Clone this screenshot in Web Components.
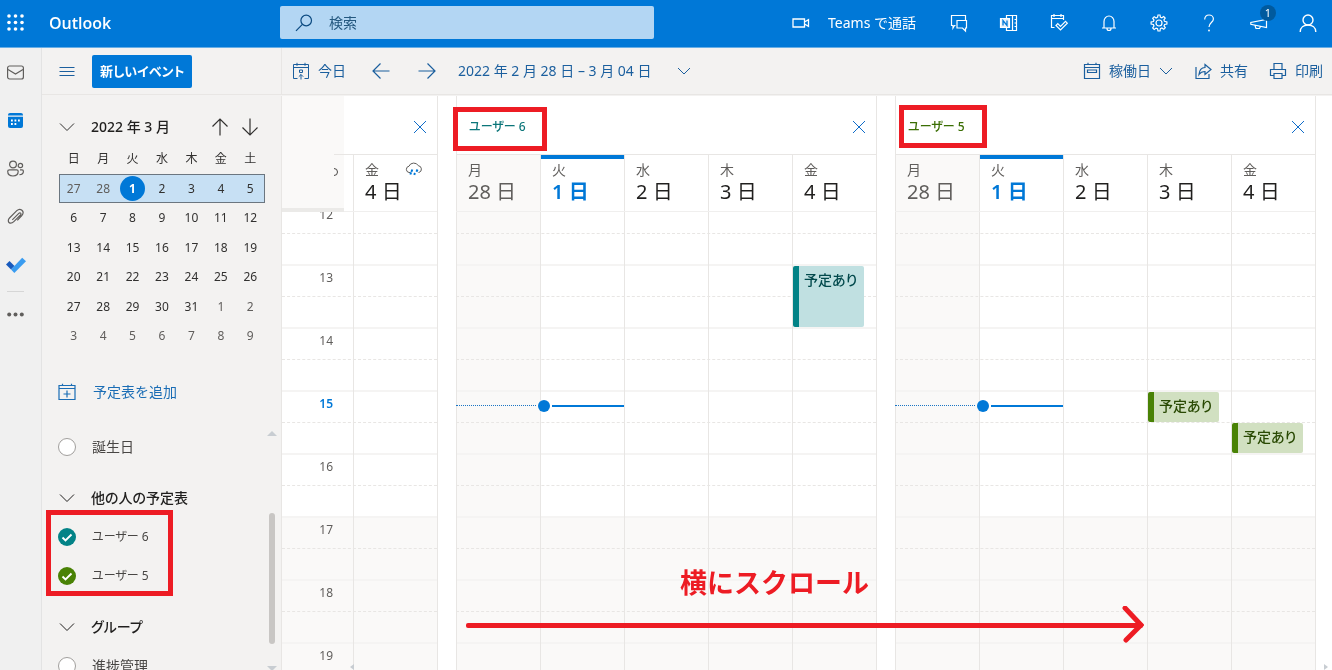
<!DOCTYPE html>
<html lang="ja">
<head>
<meta charset="utf-8">
<meta name="viewport" content="width=device-width, initial-scale=1">
<title>予定表 - Outlook</title>
<style>
  body { margin: 0; background: #fff; font: 14px/20px "Noto Sans", "Noto Sans CJK JP", sans-serif; color: #323130; }
</style>
</head>
<body>
<outlook-app></outlook-app>
<script>
const define = (name, render) => customElements.define(name, class extends HTMLElement {
  connectedCallback() {
    if (this.shadowRoot) return;
    const t = document.createElement('template');
    t.innerHTML = render(this);
    this.attachShadow({ mode: 'open' }).append(t.content.cloneNode(true));
  }
});

const BUTTON = `button { font: inherit; color: inherit; background: none; border: 0; padding: 0; margin: 0; display: flex; align-items: center; cursor: pointer; white-space: nowrap; }`;

/* ---------- icons ---------- */
const ICONS = {
  waffle: [17, [2, 8.5, 15].map(y => [2, 8.5, 15].map(x => `<circle cx="${x}" cy="${y}" r="1.8" fill="currentColor" stroke="none"/>`).join('')).join('')],
  search: [18, `<circle cx="11.2" cy="6.5" r="5.3"/><path d="M7.4 10.4 1 16.8"/>`],
  video: [18, `<path d="M1 5h11.5v8H1zM12.5 8l4-2.300v6.600l-4-2.300"/>`],
  chat: [18, `<path d="M5.500 11.500H4.500L3 14v-2.500H1.500v-10h14V6"/><path d="M7 6.500h9.500v7.500h-1v3l-3-3H7z"/>`],
  onenote: [18, `<path d="M6.500 4.500v-3h10v15h-10v-3M12.500 1.500v15M14.500 5.500h2M14.500 9h2M14.500 12.500h2"/><path d="M.5 4.500h9v9h-9z" fill="#e6f2fc"/><path d="M3 11.500v-5l4 5v-5" stroke="#0078d7" stroke-width="1.300"/>`],
  todo: [18, `<path d="M4.500 13.500h-3v-12h12V6M1.500 4.500h12M4 0v3M11 0v3"/><path d="m6 11.500 1.800-1.800 2.700 2.700 5-5 1.800 1.800-6.800 6.800z"/>`],
  bell: [18, `<path d="M4 14V7.500a5 5.500 0 0 1 10 0V14M2 14h14M7 14.500a2 2 0 0 0 4 0"/>`],
  gear: [18, `<path d="M7.600 3.200 8 1h2l.4 2.200 1.400.6 1.900-1.300 1.500 1.500-1.300 1.900.6 1.400L16.900 8v2l-2.300.5-.6 1.400 1.300 1.900-1.500 1.500-1.900-1.300-1.500.6L10 17H8l-.5-2.300-1.400-.6-1.900 1.300-1.500-1.500L4 12l-.6-1.500L1.100 10V8l2.300-.5L4 6.100 2.700 4.200l1.500-1.500L6.100 4z"/><circle cx="9" cy="9" r="3"/>`],
  help: [18, `<path d="M4.700 5.500C4.700 2.500 6.500 1 9 1s4.400 1.700 4.400 4c0 3.500-4.400 3.700-4.400 8"/><circle cx="9" cy="16.500" r=".9" fill="currentColor" stroke="none"/>`],
  megaphone: [18, `<path d="M16.500 5.500v8L.8 10.300V8.500zM5 11.500l1 3h3.500l1-2"/>`],
  person: [18, `<circle cx="9" cy="6" r="5"/><path d="M1.200 18c0-4.500 3.500-7 7.800-7s7.800 2.500 7.800 7"/>`],
  mail: [17, `<rect x=".6" y="2" width="15.800" height="13" rx="2"/><path d="m1 5.500 7.500 4.500L16 5.500"/>`],
  calendarFill: [17, `<path d="M1 3.500V3a2 2 0 0 1 2-2h11a2 2 0 0 1 2 2v.5z" fill="currentColor" stroke="none"/><path d="M1 4.800h15V14a2 2 0 0 1-2 2H3a2 2 0 0 1-2-2z" fill="currentColor" stroke="none"/><path d="M4 8.500h1.800M7.500 8.500h1.800M11 8.500h1.800M4 12h1.800M7.500 12h1.800" stroke="#fff" stroke-width="1.800"/>`],
  people: [17, `<circle cx="6" cy="4.500" r="3.400"/><circle cx="13.400" cy="5.500" r="2.200"/><path d="M2.500 9.800h7.200c1 0 1.500.7 1.500 1.500 0 3-2 4.700-5.200 4.700S.7 14.300.7 11.300c0-.8.7-1.500 1.800-1.500zM13 9.800h2c.8 0 1.400.6 1.400 1.400 0 2-1.400 3.400-3.900 3.400"/>`],
  clip: [17, `<path d="m5 11.500 6.500-6.500c1.400-1.400 3 .3 1.700 1.700L6.500 13.300C4.500 15.300 1 15.700 1 12.200c0-1 .5-1.800 1.200-2.500L9.500 2.400c3.500-3.500 8.500.8 5 4.800l-4.500 4.900" transform="translate(.3 .3)"/>`],
  check: [20, `<path d="M0 10.500 3.500 7l5 5-3.500 3.600z" fill="#185abd" stroke="none"/><path d="M5 15.600 16.200 3.800 20 7.300 8.300 19z" fill="#3a9cf0" stroke="none"/>`],
  more: [17, `<circle cx="2.200" cy="8.500" r="2" fill="currentColor" stroke="none"/><circle cx="8.500" cy="8.500" r="2" fill="currentColor" stroke="none"/><circle cx="14.800" cy="8.500" r="2" fill="currentColor" stroke="none"/>`],
  menu: [16, `<path d="M.5 4.500h15M.5 8.500h15M.5 12.500h15"/>`],
  today: [18, `<path d="M5.500 16.500h-4v-14h15v14h-4M1.500 5.500h15M5 .8v3M13 .8v3M7.500 8h3v2.500h-3zM9 17.500V12.500M6.800 14.700 9 12.500l2.200 2.200"/>`],
  left: [18, `<path d="M17.500 9H1M8.500 1.500 1 9l7.500 7.500"/>`],
  right: [18, `<path d="M.5 9H17M9.500 1.500 17 9l-7.500 7.500"/>`],
  up: [18, `<path d="M9 17.500V1M1.500 8.500 9 1l7.500 7.500"/>`],
  down: [18, `<path d="M9 .5V17M1.500 9.500 9 17l7.500-7.500"/>`],
  chevron: [16, `<path d="m1 4.500 7 7 7-7"/>`],
  chevronSmall: [14, `<path d="m1 4 6 6 6-6"/>`],
  week: [18, `<path d="M1.500 2.500h15v14h-15zM1.500 5.500h15M5 .8v2M13 .8v2M4.500 8h9v2.500h-9z"/>`],
  share: [18, `<path d="M2 5v11.500h13V12"/><path d="M11 2.500 17 7.500l-6 5V9.500c-3 0-4.500.8-6 3C5.300 8.500 7.500 5.700 11 5.500z"/>`],
  print: [18, `<path d="M4.500 13.500H1.500v-6h15v6h-3M5 7.500v-6h8v6M5 11.500h8v5H5z"/>`],
  addCalendar: [18, `<path d="M1 2.500h16v14H1zM1 5.500h16M4.500.8v2M13.500.8v2M9 7.500v7M5.500 11h7"/>`],
  close: [14, `<path d="m1 1 12 12M13 1 1 13"/>`],
  rain: [18, `<path d="M5 11.500H4a3.200 3.200 0 0 1 0-6.300 5 4.500 0 0 1 9.300-.5 3.500 3.500 0 0 1 .7 6.800h-.5"/><path d="m7.300 8.500-2 5M12.500 8.500l-1.300 2.800M10 12l-.8 1.800" stroke="#0078d7" stroke-width="2" stroke-dasharray="2.500 .6"/>`],
  tick: [18, `<path d="m4.500 9.500 3 3 6-6" stroke-width="1.900"/>`]
};
define('ol-icon', el => {
  const [size, art] = ICONS[el.getAttribute('name')];
  return `<style>:host { display: block; flex: none; } svg { display: block; overflow: visible; }</style>
  <svg width="${size}" height="${size}" viewBox="0 0 ${size} ${size}" fill="none" stroke="currentColor" stroke-width="${el.getAttribute('weight') || 1}" aria-hidden="true">${art}</svg>`;
});

/* ---------- red marker frame laid over its parent ---------- */
define('marker-frame', () => `<style>:host { position: absolute; box-sizing: border-box; border: 5px solid #ed1c24; pointer-events: none; z-index: 3; }</style>`);

/* ---------- blue bar ---------- */
define('app-header', () => `<style>
  :host { display: flex; align-items: center; height: 47px; background: #0078d7; border-bottom: 1px solid #67aee6; color: #fff; }
  ${BUTTON}
  .brand { display: flex; align-items: center; flex: none; width: 280px; padding: 0 0 2px 7px; gap: 25px; box-sizing: border-box; }
  .brand a { color: #fff; text-decoration: none; font: 600 16px/20px "Open Sans", "Noto Sans", sans-serif; }
  label { display: flex; align-items: center; gap: 16px; flex: 0 1 374px; height: 33px; box-sizing: border-box; padding: 0 15px; background: #b3d6f3; border-radius: 2px; color: #0b4a80; margin-bottom: 2px; min-width: 0; }
  input { flex: 1; min-width: 0; border: 0; outline: 0; background: none; font: inherit; color: inherit; padding: 0; }
  input::placeholder { color: #24587f; opacity: 1; }
  nav { display: flex; align-items: center; margin-left: auto; padding-bottom: 2px; }
  nav button { width: 50px; height: 40px; justify-content: center; position: relative; }
  nav .teams { width: auto; gap: 18px; margin-right: 18px; }
  nav button:last-child { width: 48px; }
  .badge { position: absolute; right: 8px; top: 2px; width: 16px; height: 16px; border-radius: 8px; background: #005a9e; font-size: 11px; line-height: 16px; text-align: center; }
</style>
<div class="brand"><button aria-label="アプリ起動ツール"><ol-icon name="waffle"></ol-icon></button><a href="#">Outlook</a></div>
<label><ol-icon name="search" weight="1.200"></ol-icon><input type="search" placeholder="検索" aria-label="検索"></label>
<nav>
  <button class="teams"><ol-icon name="video" weight="1.300"></ol-icon><span>Teams で通話</span></button>
  ${['chat', 'onenote', 'todo', 'bell', 'gear', 'help'].map(n => `<button aria-label="${n}"><ol-icon name="${n}" weight="1.200"></ol-icon></button>`).join('')}
  <button aria-label="お知らせ"><ol-icon name="megaphone" weight="1.200"></ol-icon><span class="badge">1</span></button>
  <button aria-label="アカウント"><ol-icon name="person" weight="1.400"></ol-icon></button>
</nav>`);

/* ---------- module rail ---------- */
define('app-rail', () => `<style>
  :host { display: flex; flex-direction: column; width: 31px; padding-right: 10px; background: #f0f0f0; border-right: 1px solid #e3e3e3; color: #605e5c; }
  a { display: flex; height: 48px; align-items: center; justify-content: center; color: inherit; }
  a.on { color: #0078d7; }
  hr { width: 17px; margin: 3px auto 0; border: 0; border-top: 1px solid #d6d6d6; }
  hr + a { height: 44px; }
</style>
<a href="#mail" aria-label="メール"><ol-icon name="mail" weight="1.200"></ol-icon></a>
<a href="#calendar" class="on" aria-label="予定表"><ol-icon name="calendarFill"></ol-icon></a>
<a href="#people" aria-label="連絡先"><ol-icon name="people" weight="1.200"></ol-icon></a>
<a href="#files" aria-label="ファイル"><ol-icon name="clip" weight="1.200"></ol-icon></a>
<a href="#todo" aria-label="To Do"><ol-icon name="check"></ol-icon></a>
<hr>
<a href="#more" aria-label="その他"><ol-icon name="more"></ol-icon></a>`);

/* ---------- command bar ---------- */
define('app-toolbar', () => `<style>
  :host { display: flex; height: 46px; border-bottom: 1px solid #e8e6e4; background: #f3f2f1; color: #1b5f9e; }
  ${BUTTON}
  .side { display: flex; align-items: center; gap: 17px; flex: none; width: 240px; padding-left: 17px; box-sizing: border-box; border-right: 1px solid #e8e6e4; }
  .new { height: 33px; padding: 0 8px; border-radius: 2px; background: #0078d7; color: #fff; font-size: 13px; font-weight: 600; font-feature-settings: "palt"; }
  .bar { display: flex; align-items: center; flex: 1; padding: 0 9px 0 10px; }
  .bar button { gap: 8px; }
  .prev { margin-left: 26px; }
  .next { margin-left: 28px; }
  .bar .range { margin-left: 22px; gap: 26px; }
  .right { display: flex; margin-left: auto; gap: 21px; }
</style>
<div class="side"><button aria-label="メニュー"><ol-icon name="menu"></ol-icon></button><button class="new">新しいイベント</button></div>
<div class="bar">
  <button><ol-icon name="today"></ol-icon>今日</button>
  <button class="prev" aria-label="前の週"><ol-icon name="left" weight="1.200"></ol-icon></button>
  <button class="next" aria-label="次の週"><ol-icon name="right" weight="1.200"></ol-icon></button>
  <button class="range">2022 年 2 月 28 日 – 3 月 04 日 <ol-icon name="chevronSmall"></ol-icon></button>
  <div class="right">
    <button><ol-icon name="week" weight="1.200"></ol-icon>稼働日<ol-icon name="chevronSmall"></ol-icon></button>
    <button><ol-icon name="share" weight="1.200"></ol-icon>共有</button>
    <button><ol-icon name="print" weight="1.200"></ol-icon>印刷</button>
  </div>
</div>`);

/* ---------- month picker ---------- */
define('mini-calendar', () => {
  const days = [27, 28, ...Array.from({ length: 31 }, (_, i) => i + 1), 1, 2, 3, 4, 5, 6, 7, 8, 9];
  const rows = Array.from({ length: 6 }, (_, r) => `<tr${r === 0 ? ' class="week"' : ''}>${days.slice(r * 7, r * 7 + 7).map((d, c) => {
    const i = r * 7 + c;
    return `<td class="${i < 2 || i > 32 ? 'out' : ''}">${i === 2 ? '<b>1</b>' : d}</td>`;
  }).join('')}</tr>`).join('');
  return `<style>
  :host { display: block; padding: 13px 16px 0 17px; }
  ${BUTTON}
  header { display: flex; align-items: center; height: 35px; color: #323130; }
  h2 { flex: 1; margin: 0 0 0 16px; font-size: 14px; line-height: 20px; font-weight: 500; color: #201f1e; }
  .nav { margin-right: 12px; }
  .nav + .nav { margin-right: 6px; }
  table { width: 206px; border-collapse: collapse; table-layout: fixed; font-size: 12px; line-height: 16px; text-align: center; }
  tr { height: 30px; }
  tbody tr:nth-child(odd) { height: 29px; }
  th, td { padding: 0; font-weight: 400; color: #323130; }
  td.out { color: #605e5c; }
  .week { background: #c7e0f4; outline: 1px solid #6b7680; outline-offset: -1px; }
  b { display: block; width: 25px; height: 25px; margin: 0 auto; border-radius: 13px; background: #0078d7; color: #fff; line-height: 25px; }
</style>
<header><button aria-label="折りたたむ"><ol-icon name="chevron"></ol-icon></button><h2>2022 年 3 月</h2>
<button class="nav" aria-label="前の月"><ol-icon name="up" weight="1.200"></ol-icon></button><button class="nav" aria-label="次の月"><ol-icon name="down" weight="1.200"></ol-icon></button></header>
<table><thead><tr>${[...'日月火水木金土'].map(d => `<th scope="col">${d}</th>`).join('')}</tr></thead><tbody>${rows}</tbody></table>`;
});

/* ---------- calendar list ---------- */
define('calendar-choice', el => `<style>
  :host { display: block; }
  label { display: flex; align-items: center; gap: 16px; height: 39px; font-feature-settings: "palt"; color: #484644; }
  .box { display: grid; color: #fff; }
  .box > * { grid-area: 1 / 1; }
  input { appearance: none; box-sizing: border-box; width: 18px; height: 18px; margin: 0; border: 1px solid #a19f9d; border-radius: 9px; background: #fff; }
  input:checked { border: 0; background: var(--tint); }
  ol-icon { pointer-events: none; }
</style>
<label><span class="box"><input type="checkbox"${el.hasAttribute('checked') ? ' checked' : ''}><ol-icon name="tick"></ol-icon></span><span><slot></slot></span></label>`);

define('calendar-group', () => `<style>
  :host { display: block; margin-top: 13px; position: relative; }
  ${BUTTON}
  button { gap: 16px; height: 38px; padding-left: 1px; font-weight: 500; color: #201f1e; font-feature-settings: "palt"; }
</style>
<button aria-expanded="true"><ol-icon name="chevron"></ol-icon><slot name="title"></slot></button><slot></slot>`);

define('app-sidebar', () => `<style>
  :host { display: flex; flex-direction: column; width: 240px; flex: none; background: #f3f2f1; border-right: 1px solid #e8e6e4; box-sizing: border-box; min-height: 0; }
  ${BUTTON}
  .add { height: 38px; margin: 22px 16px 16px; gap: 17px; color: #1a6db5; }
  .list { display: flex; flex: 1; min-height: 0; overflow: hidden; }
  .items { flex: 1; padding-left: 16px; }
  .user { font-size: 12px; }
  marker-frame { inset: 31px auto auto -12px; width: 127px; height: 86px; }
  .scroll { display: flex; flex-direction: column; align-items: center; width: 9px; margin-right: 5px; padding: 4px 0 0; }
  .arrow { width: 0; height: 0; border: 5px solid transparent; border-top: 0; border-bottom-color: #c8cdd2; }
  .arrow.down { border: 5px solid transparent; border-bottom: 0; border-top-color: #c8cdd2; }
  .thumb { width: 6px; height: 131px; margin: 77px 0 22px; border-radius: 3px; background: #c8c6c4; flex: none; }
</style>
<mini-calendar></mini-calendar>
<button class="add"><ol-icon name="addCalendar" weight="1.200"></ol-icon>予定表を追加</button>
<div class="list">
  <div class="items">
    <calendar-choice>誕生日</calendar-choice>
    <calendar-group><span slot="title">他の人の予定表</span>
      <calendar-choice class="user" checked style="--tint:#038387">ユーザー 6</calendar-choice>
      <calendar-choice class="user" checked style="--tint:#498205">ユーザー 5</calendar-choice>
      <marker-frame></marker-frame>
    </calendar-group>
    <calendar-group><span slot="title">グループ</span><calendar-choice>進捗管理</calendar-choice></calendar-group>
  </div>
  <div class="scroll"><span class="arrow"></span><span class="thumb"></span><span class="arrow down"></span></div>
</div>`);

/* ---------- one person's week ---------- */
define('calendar-event', () => `<style>
  :host { position: absolute; left: 0; right: 12px; box-sizing: border-box; padding-left: 5px; border-left: 6px solid var(--tint); border-radius: 2px; background: var(--fill); color: var(--ink); font-weight: 500; line-height: 28px; font-feature-settings: "palt"; white-space: nowrap; overflow: hidden; }
</style><slot></slot>`);

const HOURS = [12, 13, 14, 15, 16, 17, 18, 19];
const PANEL = `
  :host { display: flex; flex-direction: column; min-width: 0; position: relative; border-right: 1px solid #e8e6e4; box-sizing: border-box; }
  ${BUTTON}
  header { display: flex; align-items: center; height: 58px; flex: none; padding: 0 10px 0 13px; border-bottom: 1px solid #e8e6e4; box-sizing: content-box; position: relative; }
  h3 { flex: 1; margin: 0; padding-top: 4px; font-size: 12px; line-height: 20px; font-weight: 500; color: var(--name); font-feature-settings: "palt"; }
  header button { color: #0f6cc9; padding-top: 4px; }
  .heads, .cols, .now { display: grid; grid-template-columns: var(--cols); }
  .head { height: 56px; box-sizing: border-box; padding: 5px 14px 0 11px; border-left: 1px solid #e8e6e4; }
  .heads { border-bottom: 1px solid #f0efee; }
  .head.past, .col.past { background: #faf9f8; }
  .head p { display: flex; align-items: center; justify-content: space-between; margin: 0; color: #605e5c; line-height: 20px; }
  .head strong { display: block; font-weight: 400; font-size: 20px; line-height: 24px; color: #201f1e; white-space: nowrap; }
  .head.past strong { color: #605e5c; }
  .head.today { box-shadow: inset 0 4px #0078d7; }
  .head.today strong { color: #0078d7; font-weight: 600; }
  .body { position: relative; flex: 1; overflow: hidden; min-height: 0; }
  .hours { margin-top: -11px; }
  .hour { height: 63px; box-sizing: border-box; border-top: 2px solid #f5f4f3; position: relative; }
  .hour::after { content: ""; display: block; border-top: 1px dashed #e8e6e4; }
  .hour::before { content: ""; display: block; height: 30px; }
  .off { background: #faf9f8; }
  .cols { position: absolute; inset: 0; mix-blend-mode: darken; }
  .col { border-left: 1px solid #e8e6e4; position: relative; }
`;
define('calendar-panel', el => {
  const names = [...'月火水木金'], dates = [28, 1, 2, 3, 4];
  const kind = ['past', 'today', '', '', ''];
  return `<style>${PANEL}
  :host { --cols: repeat(5, 1fr); }
  header { border-left: 1px solid #e8e6e4; padding-left: 12px; }
  .now { position: absolute; left: 0; right: 0; top: 187px; align-items: center; height: 13px; }
  .past-line { border-top: 1px dotted #1b75c4; margin-right: 4px; }
  .today-line { display: flex; align-items: center; gap: 2px; margin-left: -2px; }
  .today-line i { width: 12px; height: 12px; border-radius: 6px; background: #0078d7; }
  .today-line i + i { flex: 1; height: 2px; border-radius: 0; }
</style>
<header><h3>${el.getAttribute('name')}</h3><button aria-label="閉じる"><ol-icon name="close"></ol-icon></button><slot name="mark"></slot></header>
<div class="heads">${names.map((n, i) => `<div class="head ${kind[i]}"><p>${n}</p><strong>${dates[i]} 日</strong></div>`).join('')}</div>
<div class="body"><div class="hours">${HOURS.map(h => `<div class="hour${h > 16 ? ' off' : ''}"></div>`).join('')}</div>
<div class="cols">${kind.map((k, i) => `<div class="col ${k}"><slot name="day${i}"></slot></div>`).join('')}</div>
<div class="now"><span class="past-line"></span><span class="today-line"><i></i><i></i></span></div></div>`;
});

/* the calendar that is scrolled half under the time gutter */
define('calendar-edge', () => `<style>${PANEL}
  :host { --cols: 71px 1fr; }
  .head:first-child, .col:first-child { border-left: 0; }
  .label { position: absolute; top: 4px; left: 0; width: 51px; text-align: right; font-size: 12px; line-height: 16px; color: #605e5c; }
  .label.current { color: #0078d7; font-weight: 600; }
  .corner { position: absolute; left: 0; top: 0; width: 62px; height: 116px; box-sizing: border-box; background: #faf9f8; border-bottom: 4px solid #ebeae8; }
  .corner::after { content: ""; position: absolute; left: 52px; top: 58px; width: 10px; border-top: 1px solid #e8e6e4; }
  .cut { position: absolute; left: 52px; top: 72px; width: 4px; height: 8px; overflow: hidden; }
  .cut::after { content: ""; position: absolute; right: 0; width: 6px; height: 6px; border: 1px solid #484644; border-radius: 4px; }
</style>
<header><h3></h3><button aria-label="閉じる"><ol-icon name="close"></ol-icon></button></header>
<div class="heads"><div class="head"></div><div class="head"><p>金<ol-icon name="rain"></ol-icon></p><strong>4 日</strong></div></div>
<div class="body"><div class="hours">${HOURS.map(h => `<div class="hour${h > 16 ? ' off' : ''}"><span class="label${h === 15 ? ' current' : ''}">${h}</span></div>`).join('')}</div>
<div class="cols"><div class="col"></div><div class="col"></div></div></div>
<div class="corner"><span class="cut"></span></div>`);

/* ---------- red note with its arrow ---------- */
define('scroll-note', () => `<style>
  :host { position: absolute; left: 184px; right: 188px; top: 468px; color: #ed1c24; pointer-events: none; z-index: 3; }
  p { margin: 0 0 0 214px; font-size: 27px; line-height: 38px; font-weight: 700; white-space: nowrap; }
  div { display: flex; align-items: center; height: 46px; }
  i { flex: 1; height: 5px; margin-right: -21px; background: currentColor; border-radius: 2px; }
  svg { display: block; }
</style>
<p><slot></slot></p>
<div><i></i><svg width="22" height="38" viewBox="0 0 22 38" fill="none" stroke="currentColor" stroke-width="5" stroke-linecap="round"><path d="M3 2 19 19 4 34"/></svg></div>`);

define('calendar-board', () => `<style>
  :host { display: grid; grid-template-columns: 156fr 421fr 421fr; column-gap: 18px; flex: 1; min-width: 0; padding-right: 16px; position: relative; background: #fff; overflow: hidden; }
  .teal { --name: #0b7579; --tint: #038387; --fill: #c0e0e1; --ink: #02494c; }
  .green { --name: #3b6e04; --tint: #498205; --fill: #d1e0c1; --ink: #294903; }
  .teal marker-frame { left: -4px; top: 11px; width: 94px; height: 44px; }
  .green marker-frame { left: 3px; top: 9px; width: 88px; height: 43px; }
  .bar { position: absolute; left: 68px; right: 4px; bottom: 0; display: flex; justify-content: space-between; }
  .bar i { width: 0; height: 0; border: 3px solid transparent; border-left-width: 0; border-right: 4px solid #c8cdd2; }
  .bar i + i { border-right-width: 0; border-left: 4px solid #c8cdd2; }
</style>
<calendar-edge></calendar-edge>
<calendar-panel class="teal" name="ユーザー 6">
  <marker-frame slot="mark"></marker-frame>
  <calendar-event slot="day4" style="top:54px;height:61px">予定あり</calendar-event>
</calendar-panel>
<calendar-panel class="green" name="ユーザー 5">
  <marker-frame slot="mark"></marker-frame>
  <calendar-event slot="day3" style="top:180px;height:30px">予定あり</calendar-event>
  <calendar-event slot="day4" style="top:211px;height:30px">予定あり</calendar-event>
</calendar-panel>
<scroll-note>横にスクロール</scroll-note>
<div class="bar"><i></i><i></i></div>`);

define('outlook-app', () => `<style>
  :host { display: flex; flex-direction: column; height: 100vh; overflow: hidden; }
  app-header { flex: none; }
  .shell { display: flex; flex: 1; min-height: 0; }
  .work { display: flex; flex-direction: column; flex: 1; min-width: 0; }
  app-toolbar { flex: none; }
  .content { display: flex; flex: 1; min-height: 0; border-top: 1px solid #f3f2f1; }
</style>
<app-header></app-header>
<div class="shell"><app-rail></app-rail>
  <div class="work"><app-toolbar></app-toolbar><div class="content"><app-sidebar></app-sidebar><calendar-board></calendar-board></div></div>
</div>`);
</script>
</body>
</html>
